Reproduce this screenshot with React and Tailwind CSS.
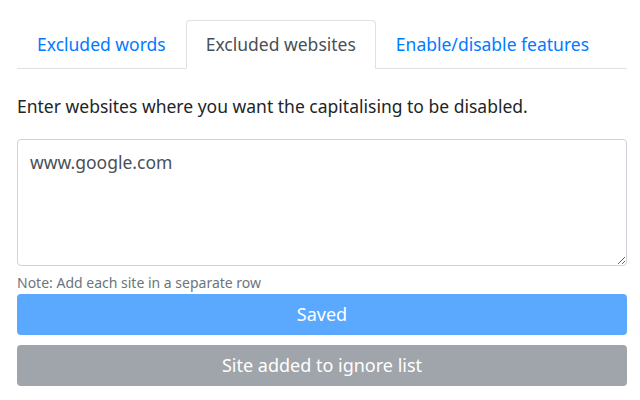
import React from "react";

const tabs = [
  { label: "Excluded words", active: false },
  { label: "Excluded websites", active: true },
  { label: "Enable/disable features", active: false },
];

const App = () => {
  return (
    <div className="min-h-screen w-[640px] bg-white pl-[17px] pr-[13px] pt-[20px] text-[17.5px] text-[#212529] font-['Noto_Sans',sans-serif]">
      {/* tabs */}
      <nav className="flex border-b border-[#dee2e6]">
        {tabs.map((tab) =>
          tab.active ? (
            <span
              key={tab.label}
              className="-mb-px rounded-t-[4px] border border-[#dee2e6] border-b-white bg-white px-[19px] py-[11px] leading-[24px] text-[#495057]"
            >
              {tab.label}
            </span>
          ) : (
            <a
              key={tab.label}
              href="#"
              className="border border-transparent px-[19px] py-[11px] leading-[24px] text-[#007bff]"
            >
              {tab.label}
            </a>
          )
        )}
      </nav>

      {/* content */}
      <p className="mt-[25px] leading-[24px]">
        Enter websites where you want the capitalising to be disabled.
      </p>
      <textarea
        className="mt-[21px] block h-[127px] w-full rounded-[4px] border border-[#ced4da] px-[12px] py-[9px] text-[17.5px] leading-[26px] text-[#495057] outline-none"
        defaultValue="www.google.com"
      />
      <div className="mt-[7px] text-[14px] leading-[20px] text-[#6c757d]">
        Note: Add each site in a separate row
      </div>
      <div className="mt-px flex flex-col gap-[10px]">
        <button className="h-[41px] w-full rounded-[4px] bg-[#5aa9ff] text-[18px] text-white">
          Saved
        </button>
        <button className="h-[41px] w-full rounded-[4px] bg-[#9fa5aa] text-[18px] text-white">
          Site added to ignore list
        </button>
      </div>
    </div>
  );
};

export default App;
